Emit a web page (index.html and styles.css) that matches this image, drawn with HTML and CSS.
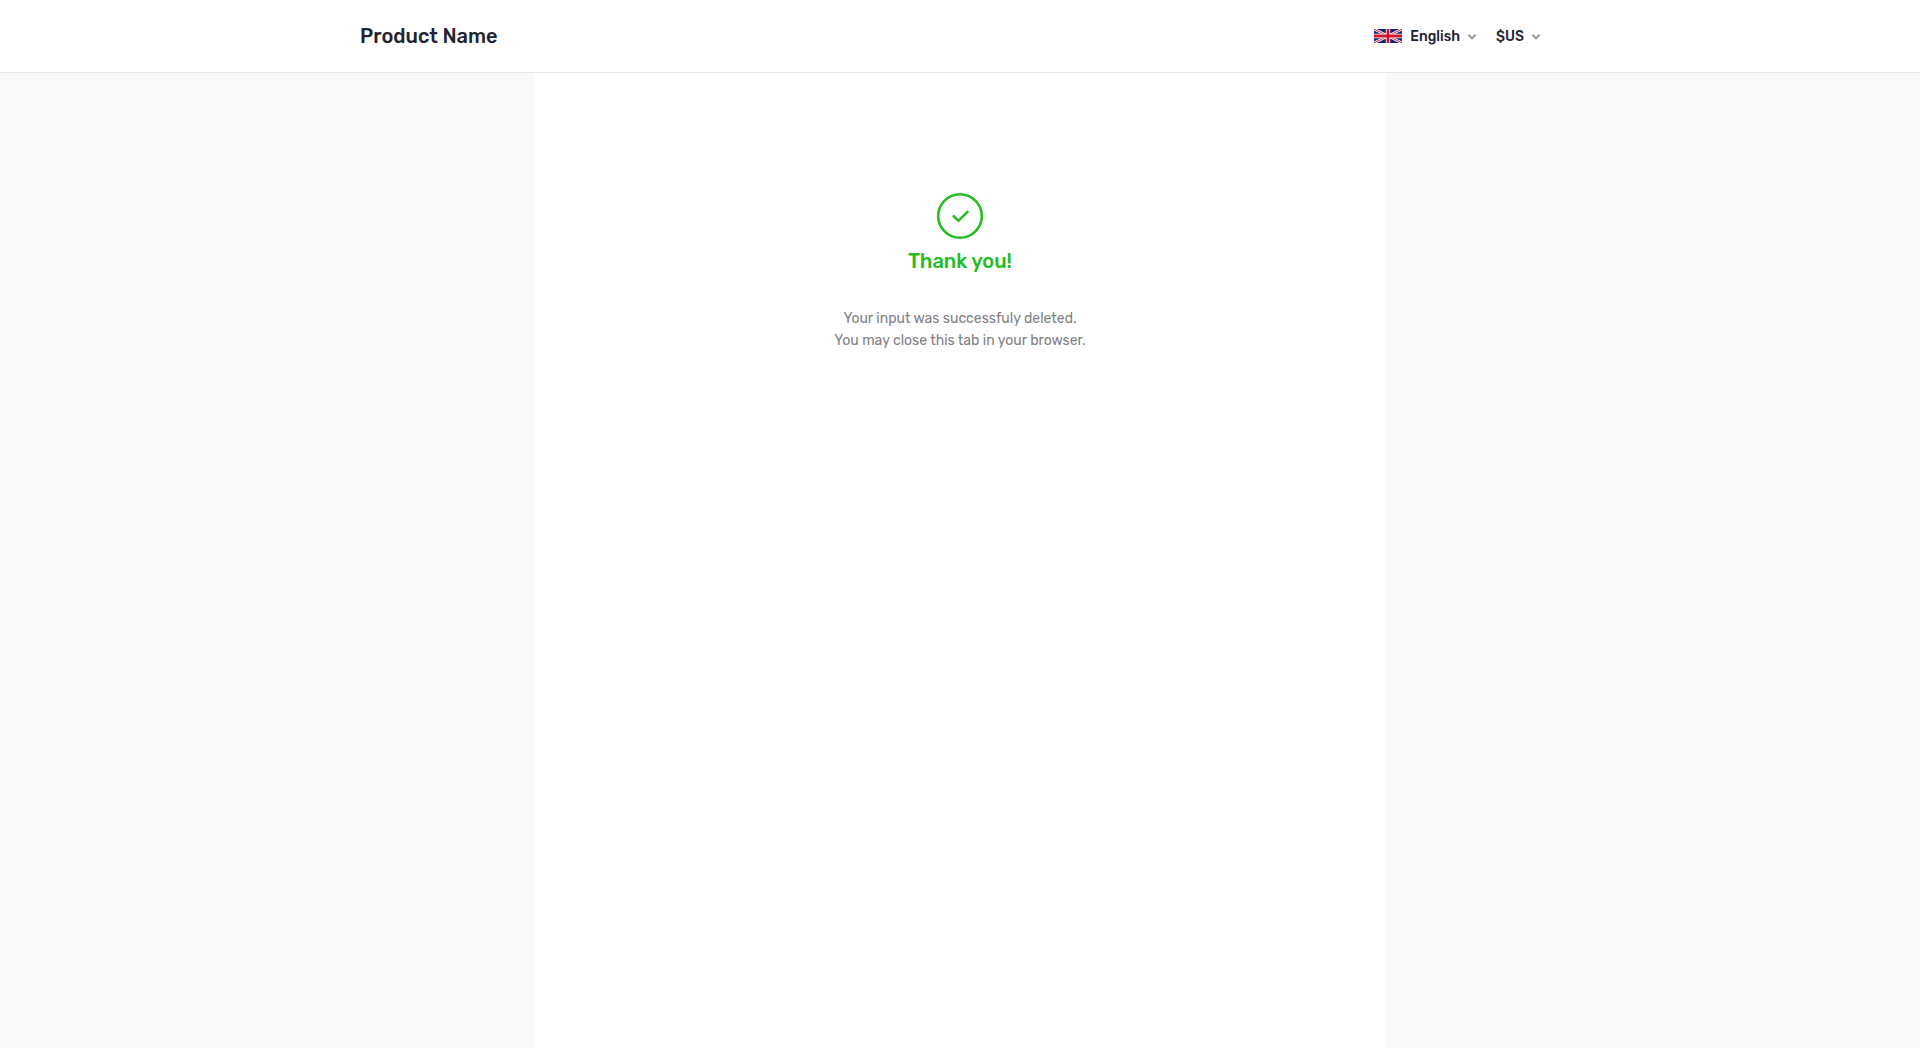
FILE: index.html
```html
<!DOCTYPE html>
<html lang="en">

<head>
  <meta charset="UTF-8">
  <meta name="viewport" content="width=device-width, initial-scale=1.0">
  <title>Product Name</title>
  <link rel="stylesheet" href="styles.css">
</head>

<body>
  <header class="header">
    <div class="container">
      <a href="#" class="logo">Product Name</a>
      <div class="settings">
        <div class="dropdown">
          <svg class="flag" viewBox="0 0 28 14" aria-hidden="true">
            <rect width="28" height="14" fill="#14247d"/>
            <path d="M0 0l28 14M28 0L0 14" stroke="#fff" stroke-width="2.6"/>
            <path d="M0 0l28 14M28 0L0 14" stroke="#d0142c" stroke-width="1"/>
            <path d="M14 0v14M0 7h28" stroke="#fff" stroke-width="4.4"/>
            <path d="M14 0v14M0 7h28" stroke="#d0142c" stroke-width="2.8"/>
          </svg>
          <select aria-label="Language">
            <option selected>English</option>
            <option>Deutsch</option>
          </select>
          <svg class="arrow" viewBox="0 0 8 5" aria-hidden="true"><path d="M.4.8L4 4.4 7.6.8"/></svg>
        </div>
        <div class="dropdown">
          <select aria-label="Currency">
            <option selected>$US</option>
            <option>€EU</option>
          </select>
          <svg class="arrow" viewBox="0 0 8 5" aria-hidden="true"><path d="M.4.8L4 4.4 7.6.8"/></svg>
        </div>
      </div>
    </div>
  </header>

  <main class="content">
    <svg class="success-icon" viewBox="0 0 46 46" aria-hidden="true">
      <circle cx="23" cy="23" r="21.8"/>
      <path d="M16.7 23.2l4.8 4.6 9-9"/>
    </svg>
    <h1>Thank you!</h1>
    <p>Your input was successfuly deleted.<br>You may close this tab in your browser.</p>
  </main>
</body>

</html>
```
FILE: styles.css
```css
* {
  box-sizing: border-box;
}

body {
  display: flex;
  flex-direction: column;
  min-height: 100vh;
  margin: 0;
  background-color: #f9f9f9;
  color: #23232f;
  font-family: Rubik, Roboto, sans-serif;
  font-size: 14px;
}

/* header */
.header {
  background-color: #fff;
  border-bottom: 1px solid #e9e9e9;
}

.container {
  display: flex;
  align-items: center;
  justify-content: space-between;
  max-width: 1200px;
  height: 72px;
  margin: 0 auto;
}

.logo {
  color: inherit;
  font-size: 20px;
  font-weight: 500;
  text-decoration: none;
}

.settings,
.dropdown {
  display: flex;
  align-items: center;
}

.dropdown {
  gap: 8px;
  padding-right: 20px;
}

.flag {
  width: 28px;
  height: 14px;
}

.dropdown select {
  appearance: none;
  field-sizing: content;
  padding: 0;
  border: 0;
  background: none;
  color: inherit;
  font: inherit;
  font-weight: 500;
  cursor: pointer;
}

.arrow {
  width: 8px;
  height: 5px;
  fill: none;
  stroke: #98989b;
  stroke-width: 2;
  overflow: visible;
}

/* message */
.content {
  flex: 1;
  width: 100%;
  max-width: 852px;
  margin: 0 auto;
  padding: 120px 20px;
  background-color: #fff;
  text-align: center;
}

.success-icon {
  display: block;
  width: 46px;
  height: 46px;
  margin: 0 auto;
  fill: none;
  stroke: #24bd24;
  stroke-width: 2.6;
  stroke-linecap: round;
  overflow: visible;
}

h1 {
  margin: 8px 0 33px;
  color: #24bd24;
  font-size: 20px;
  font-weight: 500;
  line-height: 28px;
}

p {
  margin: 0;
  color: #7f7f86;
  line-height: 22px;
}
```
